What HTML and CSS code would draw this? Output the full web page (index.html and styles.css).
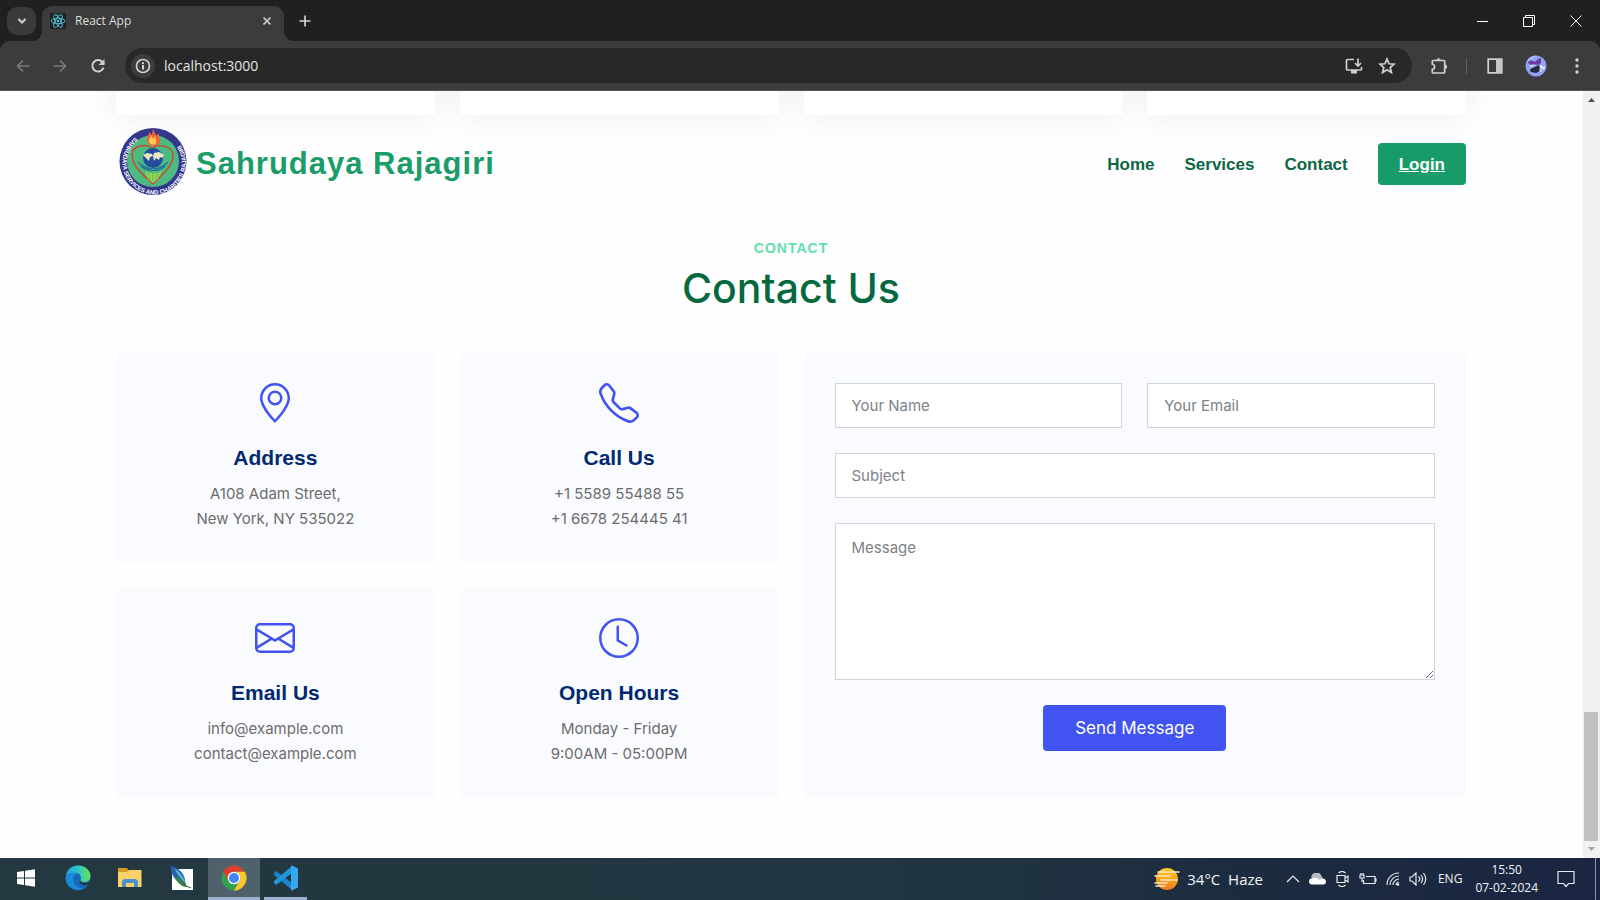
FILE: index.html
```html
<!DOCTYPE html>
<html lang="en">
<head>
<meta charset="utf-8">
<title>React App</title>
<link rel="stylesheet" href="styles.css">
</head>
<body>
<div class="tabstrip">
  <button class="tab-search" aria-label="Search tabs"><svg width="10" height="8" viewBox="0 0 10 8"><path class="stroke thick" d="M1.5 2 5 5.5 8.500 2"/></svg></button>
  <div class="tab">
    <svg class="favicon" width="16" height="16" viewBox="0 0 16 16"><rect width="16" height="16" rx="1" fill="#202124"/><g fill="none" stroke="#58c4dc" stroke-width=".9"><ellipse cx="8" cy="8" rx="7" ry="2.700"/><ellipse cx="8" cy="8" rx="7" ry="2.700" transform="rotate(60 8 8)"/><ellipse cx="8" cy="8" rx="7" ry="2.700" transform="rotate(120 8 8)"/></g><circle cx="8" cy="8" r="1.300" fill="#58c4dc"/></svg>
    <span class="tab-title">React App</span>
    <button class="plain" aria-label="Close tab"><svg width="10" height="10" viewBox="0 0 10 10"><path class="stroke" d="m1.500 1.500 7 7m0-7-7 7"/></svg></button>
  </div>
  <button class="plain new-tab" aria-label="New tab"><svg width="12" height="12" viewBox="0 0 12 12"><path class="stroke" d="M6 .5v11M.5 6h11"/></svg></button>
  <div class="window-controls">
    <button class="plain" aria-label="Minimize"><svg width="12" height="12" viewBox="0 0 12 12"><path fill="#fff" d="M1 6h11v1H1z"/></svg></button>
    <button class="plain" aria-label="Restore"><svg width="12" height="12" viewBox="0 0 12 12"><path fill="none" stroke="#fff" d="M.5 2.500h9v9h-9zM2.500 2.500v-2h9v9h-2"/></svg></button>
    <button class="plain" aria-label="Close"><svg width="12" height="12" viewBox="0 0 12 12"><path fill="none" stroke="#eee" d="m.5.5 11 11m0-11-11 11"/></svg></button>
  </div>
</div>
<div class="toolbar">
  <div class="nav-buttons">
    <button class="plain" aria-label="Back"><svg width="14" height="14" viewBox="0 0 14 14"><path class="stroke dim" d="M13.500 7H1.500M7 1.500 1.500 7 7 12.500"/></svg></button>
    <button class="plain" aria-label="Forward"><svg width="14" height="14" viewBox="0 0 14 14"><path class="stroke dim" d="M.5 7h12M7 1.500 12.500 7 7 12.500"/></svg></button>
    <button class="plain" aria-label="Reload"><svg width="16" height="16" viewBox="0 0 16 16"><path class="stroke thick" d="M13.500 9.500A5.700 5.700 0 1 1 12.300 4L14 5.700"/><path fill="#d0d0d0" d="M14.500 1v6h-6z"/></svg></button>
  </div>
  <div class="omnibox">
    <button class="site-info" aria-label="Site information"><svg width="16" height="16" viewBox="0 0 16 16"><circle class="stroke" cx="8" cy="8" r="6.500"/><path fill="#e3e3e3" d="M7.100 7h1.800v4.500H7.100zM7.100 4.300h1.800V6H7.100z"/></svg></button>
    <input class="url" aria-label="Address" value="localhost:3000">
    <button class="plain" aria-label="Install app"><svg width="18" height="16" viewBox="0 0 18 16"><path class="stroke" d="M9 1.500H2.500q-1 0-1 1V11q0 1 1 1h13q1 0 1-1V9M13 .5v7M10 5l3 3 3-3"/><path fill="#d0d0d0" d="M6 12h6v3.500H6z"/></svg></button>
    <button class="plain" aria-label="Bookmark"><svg width="18" height="17" viewBox="0 0 18 17"><path class="stroke" d="m9 2 2 4.800 5 .4-3.800 3.300 1.200 5L9 12.700l-4.400 2.800 1.200-5L2 7.200l5-.4z"/></svg></button>
  </div>
  <div class="tools">
    <button class="plain" aria-label="Extensions"><svg width="18" height="18" viewBox="0 0 18 18"><path class="stroke" d="M3 3.500h11q.7 0 .7.700v11.100q0 .7-.7.700H3q-.7 0-.7-.700V12.500a2.800 2.800 0 0 0 0-5.500V4.200q0-.7.700-.700z"/><path fill="#c7c7c7" d="M6.300 3.500a2.200 2.200 0 0 1 4.400 0zM15 7.500a2.200 2.200 0 0 1 0 4.400z"/></svg></button>
    <span class="divider"></span>
    <button class="plain" aria-label="Side panel"><svg width="16" height="16" viewBox="0 0 16 16"><path class="stroke" d="M1.200 1.200h13.600v13.600H1.200z"/><path fill="#c7c7c7" d="M9 1h6v14H9z"/></svg></button>
    <button class="plain" aria-label="Profile"><svg width="22" height="22" viewBox="0 0 22 22"><circle cx="11" cy="11" r="10.500" fill="#8fa2f5"/><path fill="#a9b6fa" d="M2 6c2-4 6-6 10-5L8 5z"/><path fill="#6b3b9c" d="M3 8c1-3 4-3 7-1l3-3 3-1v5l-3 2-4-1-3 1z"/><path fill="#252a3a" d="M5 16c0-3 3-3 5-4l4-2 2 2-2 2 1 2-4 2-5-1z"/><path fill="#f3eef8" d="m14 11 3-1 1 2-2 2zm3 2 3-2-1 4zM5 10l4 0-3 2zm9 6 3-2-1 3z"/></svg></button>
    <button class="plain" aria-label="Menu"><svg width="4" height="16" viewBox="0 0 4 16"><g fill="#d0d0d0"><circle cx="2" cy="2" r="1.700"/><circle cx="2" cy="8" r="1.700"/><circle cx="2" cy="14" r="1.700"/></g></svg></button>
  </div>
</div>

<div class="viewport">
  <div class="page">
    <div class="feature-row"><div class="feature"></div><div class="feature"></div><div class="feature"></div><div class="feature"></div></div>
    <header class="site-header">
      <a class="brand" href="#">
        <svg width="70" height="74" viewBox="0 0 70 74" role="img" aria-label="Sahrudaya Services and Charities Rajagiri">
          <circle cx="35" cy="34.500" r="33.500" fill="#34368c"/>
          <circle cx="35" cy="34" r="26" fill="#4dbb81"/>
          <path id="seal-ring" fill="none" d="M17.500 10.200A31.700 31.700 0 1 0 54 9.500"/>
          <text class="seal-text"><textPath href="#seal-ring">SAHRUDAYA SERVICES AND CHARITIES RAJAGIRI</textPath></text>
          <path fill="none" stroke="#c94a2c" stroke-width="1.500" d="M35 57C27 49 14 40 14 28c0-10 15-12 20-6 5-6 21-4 21 7 0 11-13 20-20 28z"/>
          <path fill="#9bd34f" d="M27 44c4 3 12 3 17 0l-4 8-5 4-5-4z"/>
          <path fill="none" stroke="#4dbb81" d="m30 45 2 8m3-8v10m5-10-2 8"/>
          <path fill="none" stroke="#276c9b" stroke-width="1.200" d="M20 35c8 9 22 9 30 0M23 39c6 6 18 6 24 0"/>
          <circle cx="35" cy="31" r="10" fill="#254d9d"/>
          <path fill="#eee7c5" d="m25 28 4-2 5 1 1 2-3 1-1 4-3-3zM36 26l5-1 5 3-2 3-2-1-1 3-3-2-2 3-1-5z"/>
          <path fill="#ef6535" d="M29 14c-1-4 2-5 2-9l3 3 1-7 3 8 3-3c-1 4 2 5 1 9-2 6-11 6-13-1z"/>
          <path fill="#ffc958" d="M31 14c0-3 2-3 2-6l2 4 2-3c0 3 2 4 1 7-1 3-7 2-7-2z"/>
        </svg>
        <span>Sahrudaya Rajagiri</span>
      </a>
      <nav class="site-nav">
        <a href="#">Home</a><a href="#">Services</a><a href="#">Contact</a><a class="login" href="#">Login</a>
      </nav>
    </header>
    <section class="contact">
      <h2 class="eyebrow">CONTACT</h2>
      <p class="title">Contact Us</p>
      <div class="contact-grid">
        <div class="info-card">
          <svg class="info-icon" viewBox="0 0 16 16"><path d="M12.166 8.940c-.524 1.062-1.234 2.120-1.960 3.070A31.493 31.493 0 0 1 8 14.580a31.481 31.481 0 0 1-2.206-2.570c-.726-.95-1.436-2.008-1.960-3.070C3.304 7.867 3 6.862 3 6a5 5 0 0 1 10 0c0 .862-.305 1.867-.834 2.940zM8 16s6-5.686 6-10A6 6 0 0 0 2 6c0 4.314 6 10 6 10z"/><path d="M8 8a2 2 0 1 1 0-4 2 2 0 0 1 0 4zm0 1a3 3 0 1 0 0-6 3 3 0 0 0 0 6z"/></svg>
          <h3>Address</h3><p>A108 Adam Street,<br>New York, NY 535022</p>
        </div>
        <div class="info-card">
          <svg class="info-icon" viewBox="0 0 16 16"><path d="M3.654 1.328a.678.678 0 0 0-1.015-.063L1.605 2.300c-.483.484-.661 1.169-.45 1.770a17.568 17.568 0 0 0 4.168 6.608 17.569 17.569 0 0 0 6.608 4.168c.601.211 1.286.033 1.770-.45l1.034-1.034a.678.678 0 0 0-.063-1.015l-2.307-1.794a.678.678 0 0 0-.58-.122l-2.190.547a1.745 1.745 0 0 1-1.657-.459L5.482 8.062a1.745 1.745 0 0 1-.46-1.657l.548-2.190a.678.678 0 0 0-.122-.58L3.654 1.328zM1.884.511a1.745 1.745 0 0 1 2.612.163L6.290 2.980c.329.423.445.974.315 1.494l-.547 2.190a.678.678 0 0 0 .178.643l2.457 2.457a.678.678 0 0 0 .644.178l2.189-.547a1.745 1.745 0 0 1 1.494.315l2.306 1.794c.829.645.905 1.870.163 2.611l-1.034 1.034c-.74.74-1.846 1.065-2.877.702a18.634 18.634 0 0 1-7.010-4.420 18.634 18.634 0 0 1-4.420-7.009c-.362-1.030-.037-2.137.703-2.877L1.885.511z"/></svg>
          <h3>Call Us</h3><p>+1 5589 55488 55<br>+1 6678 254445 41</p>
        </div>
        <form class="message-form">
          <input aria-label="Your Name" placeholder="Your Name">
          <input aria-label="Your Email" type="email" placeholder="Your Email">
          <input class="wide" aria-label="Subject" placeholder="Subject">
          <textarea class="wide" aria-label="Message" placeholder="Message"></textarea>
          <button class="send wide" type="button">Send Message</button>
        </form>
        <div class="info-card">
          <svg class="info-icon" viewBox="0 0 16 16"><path d="M0 4a2 2 0 0 1 2-2h12a2 2 0 0 1 2 2v8a2 2 0 0 1-2 2H2a2 2 0 0 1-2-2V4zm2-1a1 1 0 0 0-1 1v.217l7 4.200 7-4.200V4a1 1 0 0 0-1-1H2zm13 2.383-4.758 2.855L15 11.114v-5.730zm-.034 6.878L9.271 8.820 8 9.583 6.728 8.820l-5.694 3.440A1 1 0 0 0 2 13h12a1 1 0 0 0 .966-.739zM1 11.114l4.758-2.876L1 5.383v5.730z"/></svg>
          <h3>Email Us</h3><p>info@example.com<br>contact@example.com</p>
        </div>
        <div class="info-card">
          <svg class="info-icon" viewBox="0 0 16 16"><path d="M8 3.500a.5.5 0 0 0-1 0V9a.5.5 0 0 0 .252.434l3.500 2a.5.5 0 0 0 .496-.868L8 8.710V3.500z"/><path d="M8 16A8 8 0 1 0 8 0a8 8 0 0 0 0 16zm7-8A7 7 0 1 1 1 8a7 7 0 0 1 14 0z"/></svg>
          <h3>Open Hours</h3><p>Monday - Friday<br>9:00AM - 05:00PM</p>
        </div>
      </div>
    </section>
  </div>
  <div class="scrollbar" aria-hidden="true">
    <svg width="17" height="17" viewBox="0 0 17 17"><path fill="#505050" d="M5 11h7L8.500 7z"/></svg>
    <div class="thumb"></div>
    <svg width="17" height="17" viewBox="0 0 17 17"><path fill="#a3a3a3" d="M5 6h7l-3.500 4z"/></svg>
  </div>
</div>

<footer class="taskbar">
  <div class="apps">
    <button class="app" aria-label="Start"><svg width="18" height="18" viewBox="0 0 18 18"><path fill="#fff" d="M0 3l7-1v6.500H0zM8 1.800 18 .3v8.200H8zM0 9.500h7V16l-7-1zM8 9.500h10v8.200L8 16.200z"/></svg></button>
    <button class="app" aria-label="Edge"><svg width="26" height="26" viewBox="0 0 26 26"><defs><linearGradient id="edge-top" x2="1"><stop offset="0" stop-color="#1fa0e0"/><stop offset=".5" stop-color="#2fc4c8"/><stop offset="1" stop-color="#6be254"/></linearGradient></defs><circle cx="13" cy="13" r="12.500" fill="#1668b8"/><path fill="url(#edge-top)" d="M1 11C2 4 7 .5 13 .5c7 0 12.500 5 12.500 10.500 0 4-3 6-6 6s-5-1-4-2c1-2 1-6-4-7C7 7.500 2 9 1 11z"/><path fill="#1b8ad8" d="M1 11c2-4 8-4 11-2-4 1-5 5-3 9s6 6 10 5C10 28-1 21 1 11z"/><path fill="#233840" d="M15.500 15c-1 1 1 3 4 3 3 0 5-1 7-3v3l-3 2c-4 1-9-1-9-3 0-1 0-2 1-2z"/></svg></button>
    <button class="app" aria-label="File Explorer"><svg width="24" height="20" viewBox="0 0 24 20"><path fill="#d99a1e" d="M0 0h9l2 3h12v4H0z"/><path fill="#fbd26a" d="M0 4h9l2-2h12.500v17H0z"/><path fill="#4a93cf" d="M4 19v-6l2-2h12l2 2v6h-4v-4H8v4z"/></svg></button>
    <button class="app" aria-label="Notes"><svg width="24" height="26" viewBox="0 0 24 26"><path fill="#fff" d="M2 4h21v21H2z"/><path fill="#2660b5" d="M1 1c6 1 13 6 14 14l1 6C8 19 0 11 1 1z"/><path fill="#55b5dc" d="M5 4c5 3 9 8 10 14-5-3-9-8-10-14z"/><path fill="#378346" d="M5 12c6 2 9 4 12 10-6 0-10-5-12-10z"/><path fill="none" stroke="#256142" d="m4 5 12 16 5 2"/></svg></button>
    <button class="app active" aria-label="Chrome"><svg width="26" height="26" viewBox="0 0 26 26"><circle cx="13" cy="13" r="12.500" fill="#2fa24f"/><path fill="#e33b2e" d="M2.200 6.700A12.500 12.500 0 0 1 23.800 6.700H13a6.300 6.300 0 0 0-5.500 9.400z"/><path fill="#fcc629" d="M23.800 6.700A12.500 12.500 0 0 1 13 25.500l5.500-9.400A6.300 6.300 0 0 0 13 6.700z"/><circle cx="13" cy="13" r="6.300" fill="#fff"/><circle cx="13" cy="13" r="5" fill="#4285f4"/></svg></button>
    <button class="app running" aria-label="Visual Studio Code"><svg width="26" height="26" viewBox="0 0 26 26"><path fill="#1b83c9" d="m1 8 2-2 16 12v7L1 10z"/><path fill="#2196dd" d="m1 18 2 2L19 8V1L1 16z"/><path fill="#35a9ef" d="m18 1 1-.500 6 3v19l-6 3-1-.500z"/></svg></button>
  </div>
  <div class="tray">
    <button class="weather"><svg width="26" height="24" viewBox="0 0 26 24"><defs><linearGradient id="sun" x2="0" y2="1"><stop offset="0" stop-color="#ffc928"/><stop offset="1" stop-color="#f07a1c"/></linearGradient></defs><circle cx="13" cy="12" r="11" fill="url(#sun)"/><path fill="none" stroke="#ffe7bd" stroke-width="1.600" stroke-linecap="round" d="M4 5h21M1 9h15M7 13h16M1 16h12M2 19h9"/></svg><span>34°C&nbsp; Haze</span></button>
    <button class="tray-icon" aria-label="Show hidden icons"><svg width="14" height="8" viewBox="0 0 14 8"><path class="line" d="m1 7 6-6 6 6"/></svg></button>
    <button class="tray-icon" aria-label="OneDrive"><svg width="18" height="12" viewBox="0 0 18 12"><path fill="#b9bcc2" d="M3 7a5 5 0 0 1 9-5l2 4z"/><path fill="#fff" d="M3 11.500a3 3 0 0 1 0-6c3-1 6 0 8 1 2-2 6-1 6 2 0 2-1 3-3 3z"/></svg></button>
    <button class="tray-icon" aria-label="Meet Now"><svg width="14" height="16" viewBox="0 0 14 16"><path class="line" d="M1 4.500h8v7H1zM9 7l3-2v6L9 9M2.500 2c2-2 5-2 7 0M2.500 14c2 2 5 2 7 0"/></svg></button>
    <button class="tray-icon" aria-label="Battery"><svg width="18" height="13" viewBox="0 0 18 13"><path class="line" d="M7 3.500h9v7H4.500V7M17 5.500v3M1 2v3h4V2zM2 0v2m2-2v2M3 5v4"/></svg></button>
    <button class="tray-icon" aria-label="Network"><svg width="14" height="14" viewBox="0 0 14 14"><path class="line" d="M1 13C1 6 6 1 13 1M4 13c0-5 4-9 9-9M7 13c0-3 3-6 6-6M10 13c0-1.500 1.500-3 3-3"/><circle cx="12" cy="12.500" r="1.300" fill="#fff"/></svg></button>
    <button class="tray-icon" aria-label="Volume"><svg width="18" height="14" viewBox="0 0 18 14"><path class="line" d="M1 5h2l4-4v12L3 9H1zM9.500 4.500c1.500 1.500 1.500 3.500 0 5M12 3c2 2.500 2 5.500 0 8M14.500 1c3 4 3 8 0 12"/></svg></button>
    <button class="language">ENG</button>
    <button class="clock">15:50<br>07-02-2024</button>
    <button class="notifications" aria-label="Notifications"><svg width="18" height="18" viewBox="0 0 18 18"><path class="line" d="M1 1.500h16v12h-5.500L9 16.500l-2.500-3H1z"/></svg></button>
  </div>
</footer>
</body>
</html>
```

FILE: styles.css
```css
* { box-sizing: border-box; }
body {
  margin: 0;
  height: 100vh;
  display: flex;
  flex-direction: column;
  overflow: hidden;
  background: #1f2120;
  font-family: Inter, "Liberation Sans", sans-serif;
}
h2, h3, p { margin: 0; }
svg { display: block; flex: none; }
button { font: inherit; color: inherit; border: 0; padding: 0; background: none; cursor: pointer; }
a { color: inherit; text-decoration: none; }
.stroke { fill: none; stroke: #d0d0d0; stroke-width: 1.7; }
.thick { stroke-width: 2; }
.dim { stroke: #7b7b7b; }
.line { fill: none; stroke: #e8eaee; stroke-width: 1.2; }
.plain { display: grid; place-items: center; }

/* Browser tabs */
.tabstrip {
  display: flex;
  align-items: center;
  height: 41px;
  padding: 0 1px 0 7px;
  color: #dedede;
  font: 12px "Open Sans", sans-serif;
}
.tab-search { display: grid; place-items: center; width: 29px; height: 28px; border-radius: 10px; background: #3b3b3b; }
.tab {
  position: relative;
  display: flex;
  align-items: center;
  align-self: flex-end;
  gap: 9px;
  width: 242px;
  height: 35px;
  margin-left: 6px;
  padding: 0 12px 6px 8px;
  border-radius: 10px 10px 0 0;
  background: #3c3c3c;
}
.tab::before, .tab::after {
  content: "";
  position: absolute;
  bottom: 0;
  width: 10px;
  height: 10px;
}
.tab::before { right: 100%; background: radial-gradient(circle at 0 0, transparent 10px, #3c3c3c 10px); }
.tab::after { left: 100%; background: radial-gradient(circle at 100% 0, transparent 10px, #3c3c3c 10px); }
.tab-title { flex: 1; }
.new-tab { margin-left: 15px; }
.window-controls { display: flex; margin-left: auto; height: 100%; }
.window-controls .plain { width: 47px; }

/* Browser toolbar */
.toolbar {
  display: flex;
  align-items: center;
  height: 50px;
  padding: 0 21px 0 16px;
  border-bottom: 1px solid #555;
  border-radius: 10px 10px 0 0;
  background: #3c3c3c;
  color: #e3e3e3;
}
.nav-buttons { display: flex; gap: 23px; }
.omnibox {
  display: flex;
  align-items: center;
  flex: 1;
  gap: 15px;
  height: 35px;
  margin: 0 18px 0 19px;
  padding: 0 16px 0 6px;
  border-radius: 18px;
  background: #282828;
}
.site-info { display: grid; place-items: center; width: 24px; height: 24px; border-radius: 50%; background: #3c3c3c; }
.url { flex: 1; min-width: 0; margin-left: -6px; padding: 0; border: 0; outline: 0; background: none; color: #e3e3e3; font: 14px "Open Sans", sans-serif; }
.tools { display: flex; align-items: center; }
.divider { width: 1px; height: 16px; margin: 0 20px 0 18px; background: #606060; }
.tools .plain + .plain { margin-left: 22px; }
.tools .plain:last-child { margin-left: 28px; }

/* Page */
.viewport { display: flex; flex: 1; min-height: 0; background: #fefefe; }
.page { flex: 1; min-width: 0; padding: 0 117px 0 116px; overflow: hidden; }
.feature-row { display: grid; grid-template-columns: repeat(4, 1fr); gap: 25px; height: 24px; }
.feature { position: relative; }
.feature::after { content: ""; position: absolute; inset: -120px 0 0; background: #fff; box-shadow: 0 0 30px rgba(1, 41, 112, .08); }
.site-header {
  position: relative;
  display: flex;
  align-items: center;
  justify-content: space-between;
  margin-top: 12px;
  font-family: "Liberation Sans", Arial, sans-serif;
  font-weight: 700;
}
.brand { display: flex; align-items: center; gap: 8px; padding-left: 2px; color: #1b9c69; font-size: 31px; letter-spacing: 1px; }
.seal-text { fill: #fff; font: 700 6px "Liberation Sans", sans-serif; letter-spacing: 0; }
.site-nav { display: flex; align-items: baseline; gap: 30px; color: #0c6843; font-size: 17px; }
.login { padding: 12px 21px 10px; border-radius: 4px; background: #169b69; color: #fff; line-height: 20px; text-decoration: underline; }
.contact { padding-top: 37px; text-align: center; }
.eyebrow { color: #60dfac; font: 700 14px/20px "Liberation Sans", sans-serif; letter-spacing: 1px; }
.title { margin-top: 5px; color: #05683f; font-size: 41px; font-weight: 500; line-height: 50px; }
.contact-grid { display: grid; grid-template-columns: repeat(4, 1fr); gap: 25px; margin-top: 40px; }
.info-card { padding: 30px 30px 32px; background: #fafbff; color: #6c6c6c; font-size: 15px; line-height: 25px; }
.info-icon { width: 40px; height: 40px; margin: 0 auto; fill: #4154f1; }
.info-card h3 { margin: 22px 0 11px; color: #012970; font: 700 21px/25px "Liberation Sans", sans-serif; }
.message-form {
  display: grid;
  grid-template-columns: 1fr 1fr;
  grid-column: 3 / 5;
  grid-row: 1 / 3;
  align-content: start;
  gap: 25px;
  padding: 30px 31px;
  background: #fafbff;
}
.message-form input, .message-form textarea {
  display: block;
  width: 100%;
  min-width: 0;
  height: 45px;
  padding: 10px 16px;
  border: 1px solid #ced4da;
  border-radius: 0;
  background: #fff;
  font: 15px/23px Inter, sans-serif;
}
.message-form textarea { height: 157px; padding-top: 12px; }
.message-form ::placeholder { color: #7b8288; opacity: 1; }
.message-form .wide { grid-column: 1 / 3; }
.message-form .send { justify-self: center; padding: 11px 32px; border-radius: 4px; background: #4154f1; color: #fff; font-size: 17px; line-height: 24px; }
.scrollbar { display: flex; flex-direction: column; width: 17px; background: #f1f1f1; }
.thumb { height: 129px; margin: auto 2px 0 1px; background: #c1c1c1; }

/* Windows taskbar */
.taskbar {
  display: flex;
  justify-content: space-between;
  height: 42px;
  background: linear-gradient(90deg, #233840, #213640 55%, #1c2b40 80%, #1b2542);
  color: #f2f4f6;
  font: 12px/18px "Open Sans", sans-serif;
}
.apps, .tray { display: flex; }
.app { display: grid; place-items: center; width: 52px; border-bottom: 3px solid transparent; }
.app.active { border-color: #9fb0d2; background: #4f626b; background-clip: padding-box; }
.app.running { width: 43px; margin-left: 4px; border-color: #9fb0d2; }
.tray { align-items: center; gap: 9px; border-right: 1px solid #8a91a0; margin-right: 4px; }
.weather { display: flex; align-items: center; gap: 7px; margin-right: 14px; font-size: 15px; }
.tray-icon { display: block; }
.language { margin-left: 2px; }
.clock { margin-left: 4px; text-align: center; }
.notifications { margin: 0 20px 0 10px; }
```
